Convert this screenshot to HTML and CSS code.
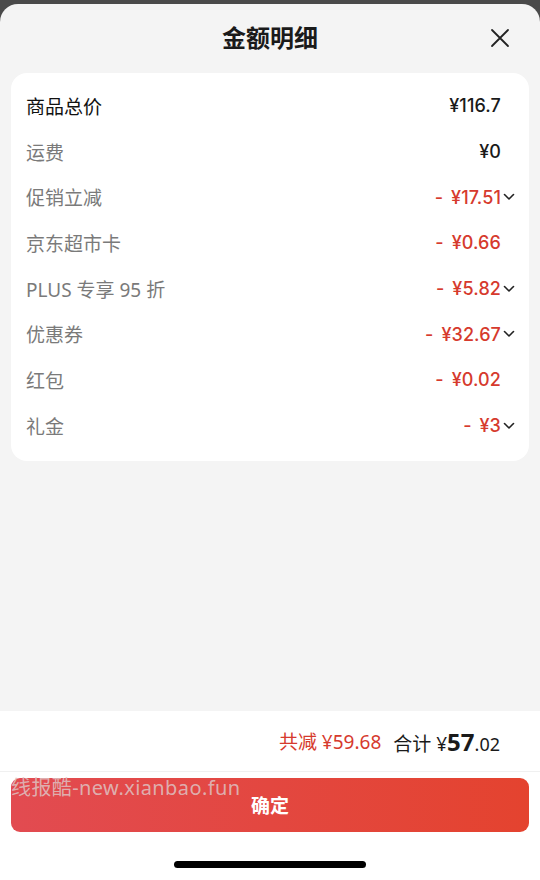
FILE: index.html
```html
<!DOCTYPE html>
<html lang="zh-CN">
<head>
<meta charset="utf-8">
<title>金额明细</title>
<link rel="stylesheet" href="styles.css">
</head>
<body>
<div class="sheet">
  <div class="header">
    <div class="title">金额明细</div>
    <svg class="close" viewBox="0 0 20 20" width="20" height="20"><path d="M2 2 L18 18 M18 2 L2 18" stroke="#222" stroke-width="1.8" stroke-linecap="round" fill="none"/></svg>
  </div>
  <div class="main">
    <div class="card">
      <div class="row"><span class="label strong">商品总价</span><span class="value dark">¥116.7</span></div>
      <div class="row"><span class="label">运费</span><span class="value dark">¥0</span></div>
      <div class="row"><span class="label">促销立减</span><span class="value red">-&nbsp;¥17.51<svg class="chev" viewBox="0 0 12 8" width="12" height="8"><path d="M1.5 1.5 L6 6 L10.5 1.5" stroke="#222" stroke-width="1.6" fill="none" stroke-linecap="round" stroke-linejoin="round"/></svg></span></div>
      <div class="row"><span class="label">京东超市卡</span><span class="value red">-&nbsp;¥0.66</span></div>
      <div class="row"><span class="label">PLUS 专享 95 折</span><span class="value red">-&nbsp;¥5.82<svg class="chev" viewBox="0 0 12 8" width="12" height="8"><path d="M1.5 1.5 L6 6 L10.5 1.5" stroke="#222" stroke-width="1.6" fill="none" stroke-linecap="round" stroke-linejoin="round"/></svg></span></div>
      <div class="row"><span class="label">优惠券</span><span class="value red">-&nbsp;¥32.67<svg class="chev" viewBox="0 0 12 8" width="12" height="8"><path d="M1.5 1.5 L6 6 L10.5 1.5" stroke="#222" stroke-width="1.6" fill="none" stroke-linecap="round" stroke-linejoin="round"/></svg></span></div>
      <div class="row"><span class="label">红包</span><span class="value red">-&nbsp;¥0.02</span></div>
      <div class="row"><span class="label">礼金</span><span class="value red">-&nbsp;¥3<svg class="chev" viewBox="0 0 12 8" width="12" height="8"><path d="M1.5 1.5 L6 6 L10.5 1.5" stroke="#222" stroke-width="1.6" fill="none" stroke-linecap="round" stroke-linejoin="round"/></svg></span></div>
    </div>
  </div>
  <div class="footer">
    <div class="summary">
      <span class="saved">共减 ¥59.68</span>
      <span class="total">合计 <span class="yen">¥</span><span class="int">57</span><span class="dec">.02</span></span>
    </div>
    <div class="btn-wrap">
      <button class="confirm">确定<span class="watermark">线报酷-new.xianbao.fun</span></button>
    </div>
    <div class="home-wrap"><div class="home"></div></div>
  </div>
</div>
</body>
</html>
```
FILE: styles.css
```css
* { box-sizing: border-box; }
html, body { margin: 0; padding: 0; }
body {
  background: #4a4a4a;
  width: 540px;
  height: 880px;
  overflow: hidden;
  font-family: "Noto Sans", "Noto Sans CJK SC", sans-serif;
  padding-top: 4px;
}
.sheet {
  height: 876px;
  background: #f4f4f4;
  border-radius: 18px 18px 0 0;
  display: flex;
  flex-direction: column;
  overflow: hidden;
}
.header {
  height: 69px;
  display: flex;
  align-items: center;
  justify-content: center;
  position: relative;
}
.title {
  font-size: 24px;
  font-weight: 700;
  color: #1a1a1a;
  line-height: 1;
  margin-top: -1px;
}
.close {
  position: absolute;
  right: 30px;
  top: 24px;
}
.main {
  flex: 1;
  padding: 0 11px;
}
.card {
  background: #fff;
  border-radius: 16px;
  padding: 10px 28px 12px 15px;
}
.row {
  height: 45.7px;
  display: flex;
  align-items: center;
  justify-content: space-between;
  font-size: 19px;
}
.label { color: #7a7a7a; }
.label.strong { color: #111; font-weight: 400; }
.value {
  display: flex;
  align-items: center;
  font-family: Inter, "Noto Sans", sans-serif;
  font-size: 18px;
  letter-spacing: 0.1px;
}
.value.dark { color: #1a1a1a; font-weight: 500; }
.value.red { color: #d63a2d; font-weight: 500; word-spacing: 3px; }
.chev {
  margin-left: 2px;
  margin-right: -14px;
}
.footer {
  background: #fff;
  height: 169px;
  display: flex;
  flex-direction: column;
}
.summary {
  height: 61px;
  border-bottom: 1px solid #f0f0f0;
  display: flex;
  align-items: center;
  justify-content: flex-end;
  padding-right: 40px;
  gap: 12px;
  font-size: 19px;
}
.saved { color: #d63a2d; }
.total { color: #1a1a1a; }
.total .yen { font-size: 19px; }
.total .int { font-size: 24px; font-weight: 700; }
.total .dec { font-size: 18px; }
.btn-wrap {
  padding: 6px 11px 0;
}
.confirm {
  position: relative;
  width: 100%;
  height: 54px;
  border: none;
  border-radius: 9px;
  background: linear-gradient(90deg, #e24b51 0%, #e4432f 100%);
  color: #fff;
  font-family: "Noto Sans CJK SC", sans-serif;
  font-size: 19px;
  font-weight: 700;
  padding-top: 0;
  display: flex;
  align-items: center;
  justify-content: center;
}
.watermark {
  position: absolute;
  left: 0;
  top: -1px;
  font-family: "Noto Sans", "Noto Sans CJK SC", sans-serif;
  font-size: 20px;
  font-weight: 400;
  letter-spacing: 0.4px;
  color: rgba(222, 188, 188, 0.9);
  white-space: nowrap;
  line-height: 22px;
}
.home-wrap {
  flex: 1;
  display: flex;
  justify-content: center;
  padding-top: 29px;
}
.home {
  width: 192px;
  height: 7px;
  border-radius: 4px;
  background: #000;
}
```
